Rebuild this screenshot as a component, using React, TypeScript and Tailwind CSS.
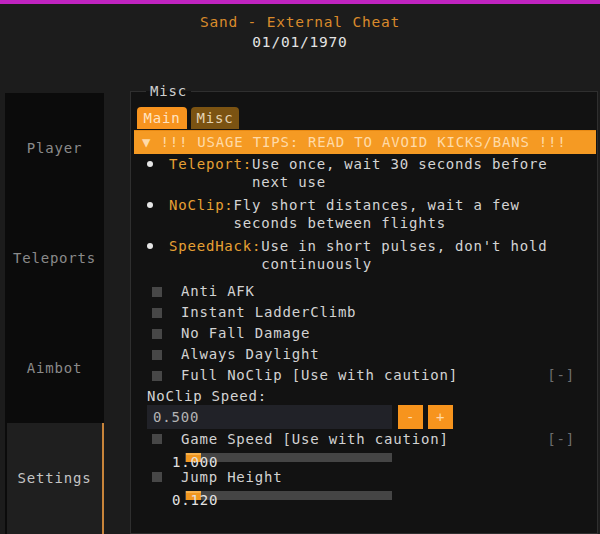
import React from 'react';

const tips = [
  { label: 'Teleport:', text: 'Use once, wait 30 seconds before next use' },
  { label: 'NoClip:', text: 'Fly short distances, wait a few seconds between flights' },
  { label: 'SpeedHack:', text: "Use in short pulses, don't hold continuously" },
];

const toggles = [
  { label: 'Anti AFK' },
  { label: 'Instant LadderClimb' },
  { label: 'No Fall Damage' },
  { label: 'Always Daylight' },
  { label: 'Full NoClip [Use with caution]', collapse: true },
];

const tabs = ['Player', 'Teleports', 'Aimbot', 'Settings'];

function Checkbox({ label, collapse, tall = 21 }: { label: string; collapse?: boolean; tall?: number }) {
  return (
    <div className={`flex items-center pl-[18px] pr-[21px] ${tall === 20 ? 'h-[20px]' : 'h-[21px]'}`}>
      <div className="w-[10px] h-[10px] bg-[#474747] shrink-0" />
      <span className="ml-[19px] text-[#d2d2d2] whitespace-nowrap">{label}</span>
      {collapse && <span className="ml-auto text-[#6e6e6e]">[-]</span>}
    </div>
  );
}

function Slider({ value, fill }: { value: string; fill: number }) {
  return (
    <div className="relative h-[18px] pt-[4px]">
      <div className="ml-[51px] w-[207px] h-[9px] bg-[#454545] relative">
        {/* grab */}
        <div
          className="absolute top-0 h-[9px] w-[15px] bg-[#f0961f] border-t-2 border-[#f7b04a]"
          style={{ left: `${fill}px` }}
        />
      </div>
      <span className="absolute left-[38px] top-[4px] leading-[18px] text-[#e2e2e2]">{value}</span>
    </div>
  );
}

export default function App() {
  return (
    <div className="w-[600px] h-[534px] bg-[#1c1c1c] overflow-hidden font-['DejaVu_Sans_Mono','Liberation_Mono',monospace] text-[14px] tracking-[0.8px]">
      {/* top accent */}
      <div className="h-[4px] bg-[#c024c0]" />

      {/* header */}
      <div className="pt-[8px] flex flex-col items-center">
        <div className="leading-[20px] text-[#d98a2b] text-[14.5px]">Sand - External Cheat</div>
        <div className="leading-[20px] text-[#e4e4e4] text-[14.5px]">01/01/1970</div>
      </div>

      <div className="flex mt-[31px] h-[451px]">
        {/* sidebar */}
        <div className="ml-[5px] mt-[10px] w-[99px] bg-[#0b0b0b] flex flex-col">
          {tabs.map((t) =>
            t === 'Settings' ? (
              <div
                key={t}
                className="flex-1 ml-[2px] bg-[#1f1f1f] border-r-2 border-[#c8843a] flex items-center justify-center text-[#c4c4c4]"
              >
                {t}
              </div>
            ) : (
              <div key={t} className="h-[110px] flex items-center justify-center text-[#8a8a8a]">
                {t}
              </div>
            )
          )}
        </div>

        {/* Misc group */}
        <fieldset className="ml-[26px] w-[468px] h-[451px] border border-[#2f2f2f] bg-[#121212] pl-[3px] pr-[1px]">
          <legend className="ml-[12px] px-[4px] leading-[16px] text-[#cfcfcf]">Misc</legend>

          {/* tabs */}
          <div className="flex mt-[8px] ml-[3px] gap-[4px] h-[22px]">
            <div className="w-[50px] rounded-t-[4px] bg-[#f7931e] text-[#ffe4c2] flex items-center justify-center">
              Main
            </div>
            <div className="w-[48px] rounded-t-[4px] bg-[#7b5312] text-[#e4d4b4] flex items-center justify-center">
              Misc
            </div>
          </div>

          {/* collapsing header */}
          <div className="mt-[1px] h-[24px] bg-[#f59a23] border-t border-[#e88a14] text-[#ffdaa8] flex items-center pl-[8px] whitespace-nowrap">
            ▼ !!! USAGE TIPS: READ TO AVOID KICKS/BANS !!!
          </div>

          {/* tips */}
          <div className="mt-[1px] flex flex-col gap-[5px]">
            {tips.map((tip) => (
              <div key={tip.label} className="flex items-start pl-[13px] pr-[16px] leading-[18px]">
                <div className="h-[18px] flex items-center shrink-0">
                  <div className="w-[6px] h-[6px] rounded-full bg-[#e6e6e6]" />
                </div>
                <span className="ml-[16px] text-[#e7a034] whitespace-nowrap">{tip.label}</span>
                <span className="flex-1 text-[#d4d4d4]">{tip.text}</span>
              </div>
            ))}
          </div>

          {/* toggles */}
          <div className="mt-[8px]">
            {toggles.map((t) => (
              <Checkbox key={t.label} label={t.label} collapse={t.collapse} />
            ))}
          </div>

          {/* NoClip speed */}
          <div className="pl-[13px] h-[18px] leading-[18px] text-[#d4d4d4] mt-[1px]">NoClip Speed:</div>
          <div className="flex pl-[13px] h-[24px]">
            <div className="w-[245px] bg-[#212228] text-[#b4b4b4] flex items-center pl-[6px]">0.500</div>
            <div className="ml-[6px] w-[25px] bg-[#f7941d] text-[#ffd9a8] flex items-center justify-center">-</div>
            <div className="ml-[5px] w-[25px] bg-[#f7941d] text-[#ffd9a8] flex items-center justify-center">+</div>
          </div>

          <Checkbox label="Game Speed [Use with caution]" collapse tall={20} />
          <Slider value="1.000" fill={1} />

          <Checkbox label="Jump Height" tall={20} />
          <Slider value="0.120" fill={1} />
        </fieldset>
      </div>
    </div>
  );
}
